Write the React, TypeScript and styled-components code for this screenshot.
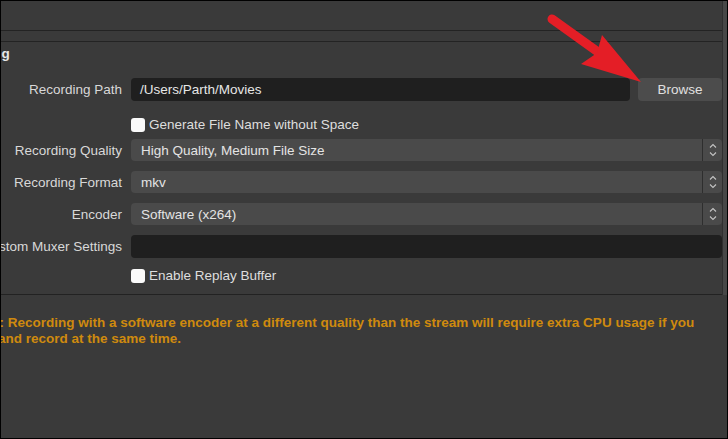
import React from "react";
import styled, { createGlobalStyle } from "styled-components";

const Global = createGlobalStyle`
  html, body { margin: 0; padding: 0; background: #3a3a3a; overflow: hidden; }
  * { box-sizing: border-box; }
`;

const Frame = styled.div`
  position: relative;
  width: 728px;
  height: 439px;
  border: 1px solid #000;
  background: #3a3a3a;
  display: flex;
  flex-direction: column;
  overflow: hidden;
  font-family: "Liberation Sans", Arial, sans-serif;
  font-size: 13.5px;
  color: #dcdcdc;
`;

const Upper = styled.div`
  display: flex;
  height: 294px;
  flex: none;
`;

const Main = styled.div`
  flex: 1;
  display: flex;
  flex-direction: column;
  min-width: 0;
`;

const TabBar = styled.div`
  height: 30px;
  flex: none;
  border-bottom: 1px solid #232323;
`;

const SubBar = styled.div`
  height: 11px;
  flex: none;
  border-bottom: 1px solid #232323;
`;

const Scroller = styled.div`
  flex: 1;
  overflow: hidden;
  border-bottom: 1px solid #222;
`;

const Content = styled.div`
  margin-left: -64px;
  padding-top: 4px;
  display: flex;
  flex-direction: column;
`;

const Heading = styled.div`
  font-weight: bold;
  line-height: 16px;
  color: #e8e8e8;
  padding-left: 6px;
`;

const Row = styled.div<{ $mt: number; $h: number }>`
  display: grid;
  grid-template-columns: 185px 1fr;
  column-gap: 9px;
  align-items: center;
  margin-top: ${(p) => p.$mt}px;
  height: ${(p) => p.$h}px;
`;

const Label = styled.div`
  display: flex;
  justify-content: flex-end;
  white-space: nowrap;
  color: #d8d8d8;
  min-width: 0;
`;

const FieldLine = styled.div`
  display: flex;
  gap: 8px;
  height: 100%;
`;

const TextInput = styled.div`
  flex: 1;
  height: 100%;
  background: #1f1f1f;
  border-radius: 4px;
  display: flex;
  align-items: center;
  padding-left: 9px;
  color: #e6e6e6;
`;

const Button = styled.div`
  width: 84px;
  height: 100%;
  background: #4c4c4c;
  border-radius: 4px;
  display: flex;
  align-items: center;
  justify-content: center;
  color: #e0e0e0;
`;

const Select = styled.div`
  display: flex;
  height: 100%;
  border-radius: 4px;
  overflow: hidden;
  background: #4a4a4a;
`;

const SelectValue = styled.div`
  flex: 1;
  display: flex;
  align-items: center;
  padding-left: 10px;
  color: #e4e4e4;
`;

const Stepper = styled.div`
  width: 20px;
  border-left: 1px solid #2e2e2e;
  display: flex;
  align-items: center;
  justify-content: center;
`;

const Check = styled.label`
  display: flex;
  align-items: center;
  gap: 4px;
  color: #dedede;
`;

const Box = styled.span`
  width: 14px;
  height: 14px;
  border-radius: 3px;
  background: #fafafa;
  flex: none;
`;

const Scrollbar = styled.div`
  width: 5px;
  flex: none;
  background: #474747;
  border-left: 1px solid #2f2f2f;
`;

const Lower = styled.div`
  flex: 1;
  overflow: hidden;
`;

const Warning = styled.p`
  margin: 20px 0 0 -51px;
  text-indent: -4px;
  font-weight: bold;
  line-height: 16px;
  color: #cf8a0e;
  white-space: nowrap;
`;

const Overlay = styled.svg`
  position: absolute;
  left: -1px;
  top: -1px;
  pointer-events: none;
`;

const StepIcon = () => (
  <svg width="8" height="14" viewBox="0 0 8 14">
    <path d="M1 4.5 L4 1.5 L7 4.5" fill="none" stroke="#c4c4c4" strokeWidth="1.1" />
    <path d="M1 9.5 L4 12.5 L7 9.5" fill="none" stroke="#c4c4c4" strokeWidth="1.1" />
  </svg>
);

const SelectField = ({ value }: { value: string }) => (
  <Select>
    <SelectValue>{value}</SelectValue>
    <Stepper>
      <StepIcon />
    </Stepper>
  </Select>
);

export default function App() {
  return (
    <>
      <Global />
      <Frame>
        <Upper>
          <Main>
            <TabBar />
            <SubBar />
            <Scroller>
              <Content>
                <Heading>Recording</Heading>
                <Row $mt={16} $h={23}>
                  <Label>Recording Path</Label>
                  <FieldLine>
                    <TextInput>/Users/Parth/Movies</TextInput>
                    <Button>Browse</Button>
                  </FieldLine>
                </Row>
                <Row $mt={16} $h={14}>
                  <span />
                  <Check>
                    <Box />
                    Generate File Name without Space
                  </Check>
                </Row>
                <Row $mt={8} $h={22}>
                  <Label>Recording Quality</Label>
                  <SelectField value="High Quality, Medium File Size" />
                </Row>
                <Row $mt={10} $h={22}>
                  <Label>Recording Format</Label>
                  <SelectField value="mkv" />
                </Row>
                <Row $mt={10} $h={22}>
                  <Label>Encoder</Label>
                  <SelectField value="Software (x264)" />
                </Row>
                <Row $mt={10} $h={23}>
                  <Label>Custom Muxer Settings</Label>
                  <TextInput />
                </Row>
                <Row $mt={10} $h={14}>
                  <span />
                  <Check>
                    <Box />
                    Enable Replay Buffer
                  </Check>
                </Row>
              </Content>
            </Scroller>
          </Main>
          <Scrollbar />
        </Upper>
        <Lower>
          <Warning>
            Warning: Recording with a software encoder at a different quality than the stream will require extra CPU usage if you
            <br />
            stream and record at the same time.
          </Warning>
        </Lower>
        <Overlay width="728" height="439" viewBox="0 0 728 439">
          <line x1="552" y1="19" x2="598" y2="52" stroke="#e41e26" strokeWidth="9" strokeLinecap="round" />
          <polygon points="641,82 602,35 597,53 581,64" fill="#e41e26" />
        </Overlay>
      </Frame>
    </>
  );
}
